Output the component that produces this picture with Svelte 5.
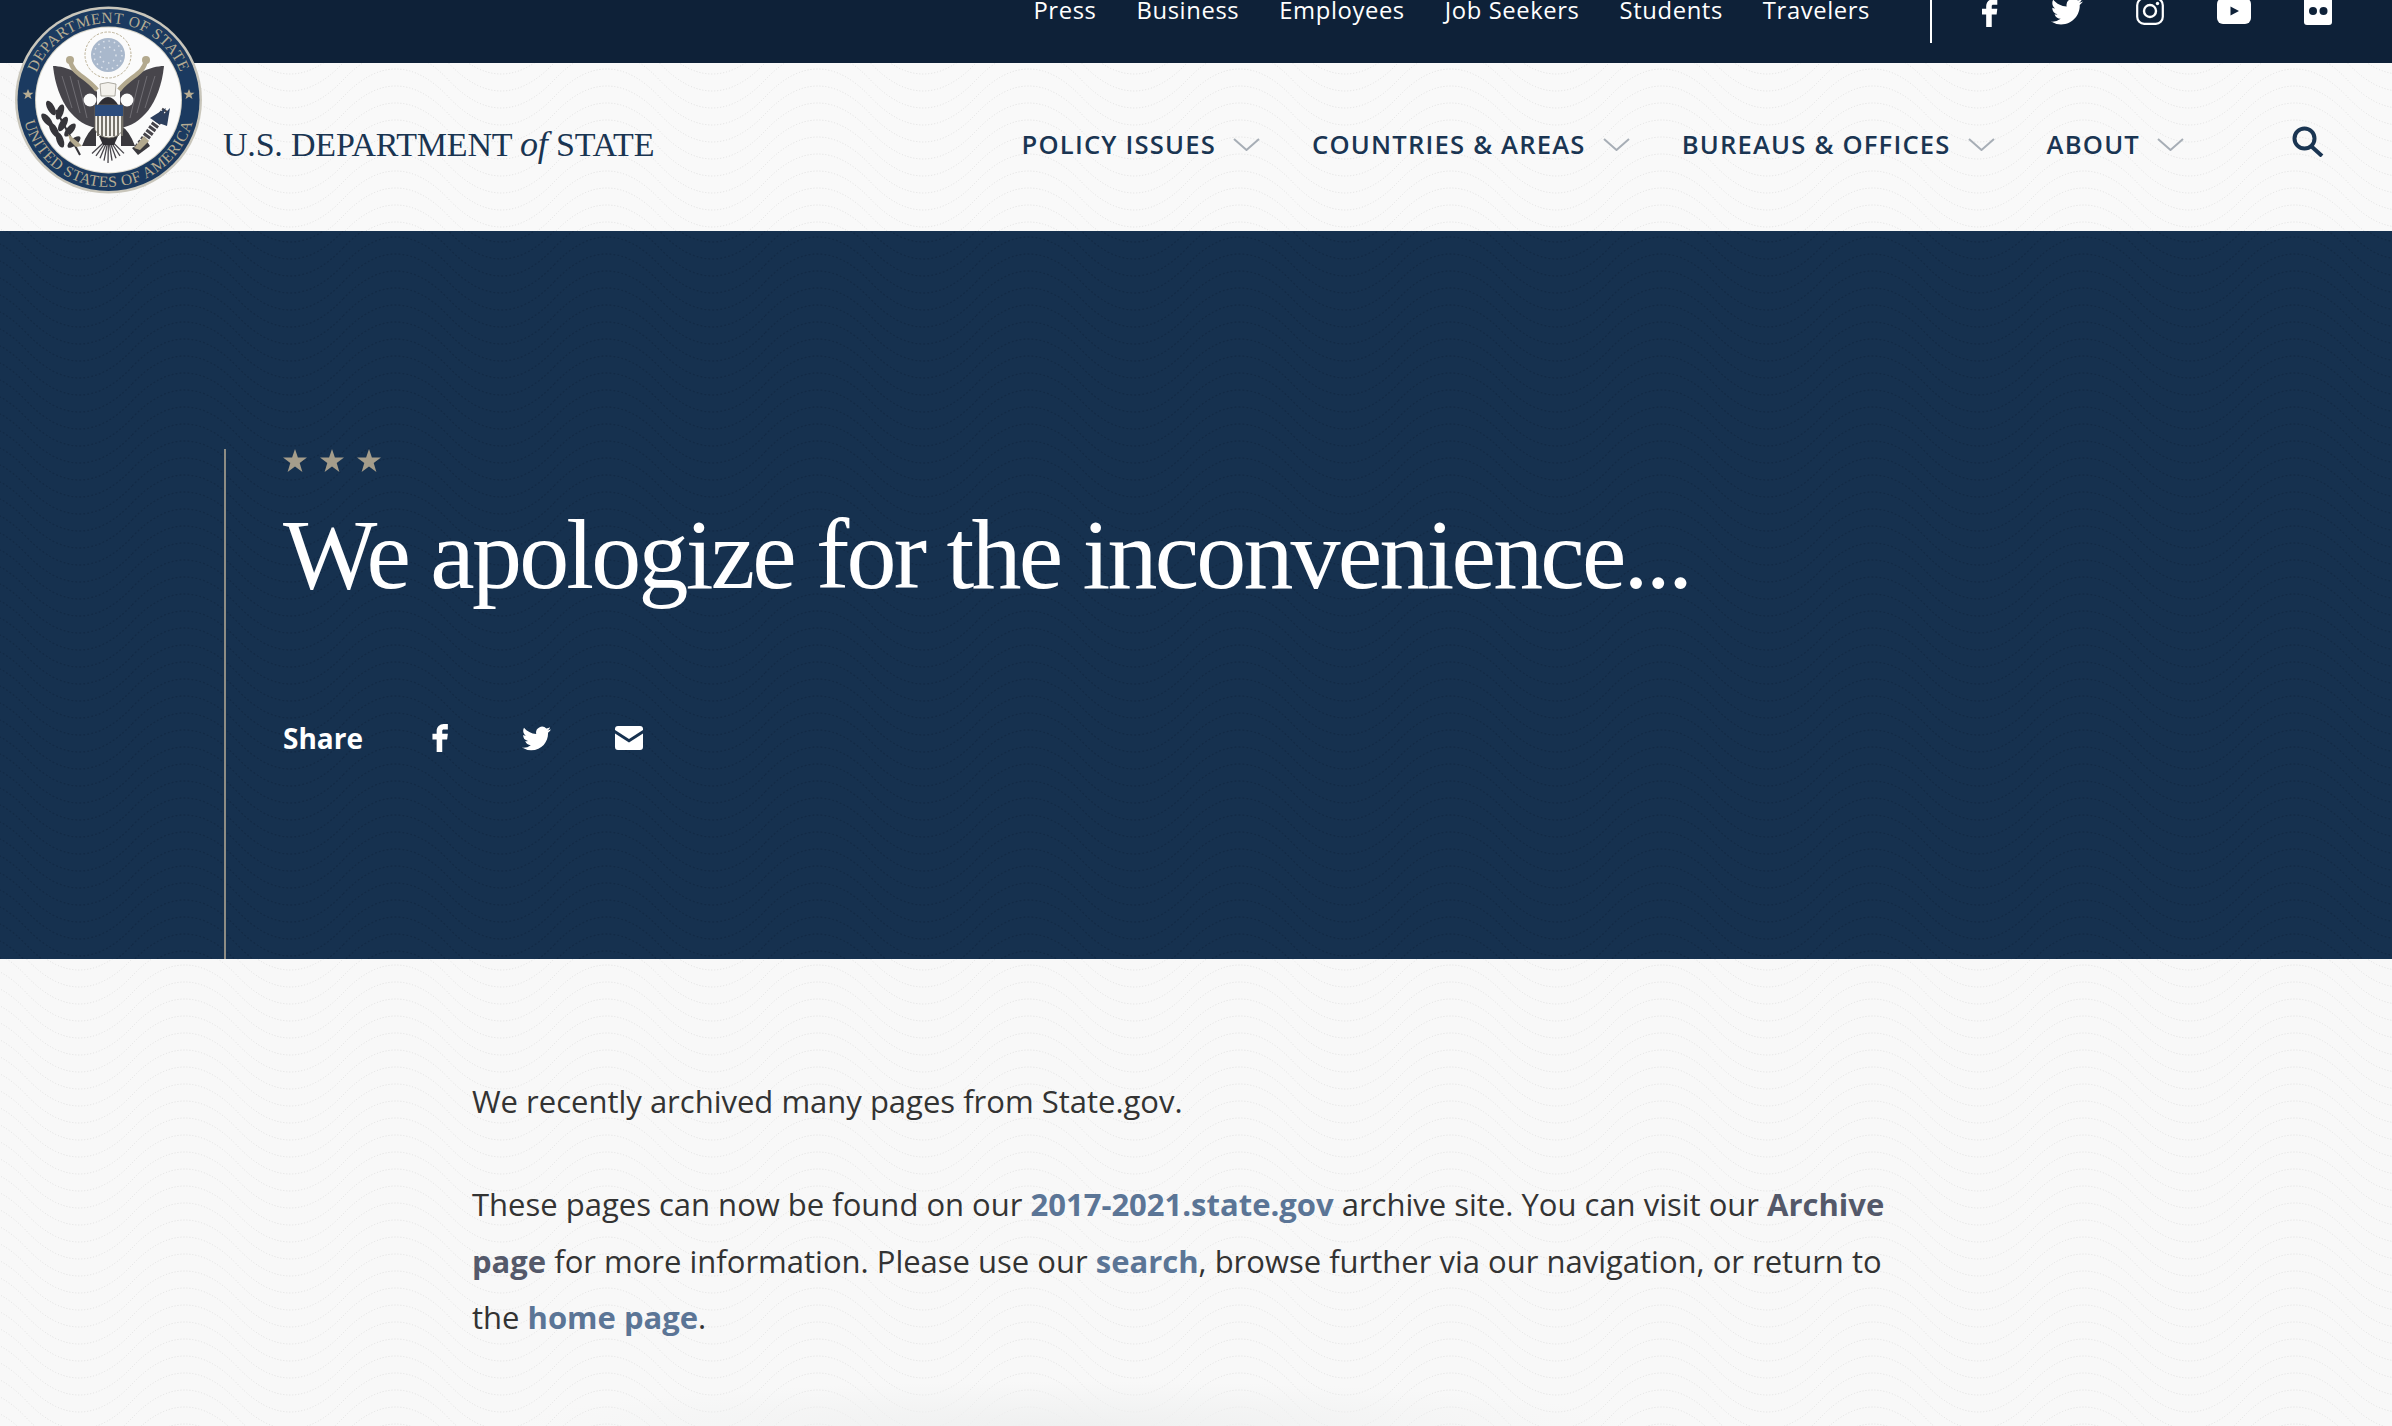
<script>
  const topLinks = ["Press", "Business", "Employees", "Job Seekers", "Students", "Travelers"];
  const mainLinks = ["POLICY ISSUES", "COUNTRIES & AREAS", "BUREAUS & OFFICES", "ABOUT"];
  const fb = "M14 8h3V4h-3c-2.8 0-5 2.2-5 5v2H6v4h3v9h4v-9h3.5l.5-4h-4V9c0-.6.4-1 1-1z";
  const tw = "M23.953 4.57a10 10 0 01-2.825.775 4.958 4.958 0 002.163-2.723c-.951.555-2.005.959-3.127 1.184a4.92 4.92 0 00-8.384 4.482C7.69 8.095 4.067 6.13 1.64 3.162a4.822 4.822 0 00-.666 2.475c0 1.71.87 3.213 2.188 4.096a4.904 4.904 0 01-2.228-.616v.06a4.923 4.923 0 003.946 4.827 4.996 4.996 0 01-2.212.085 4.936 4.936 0 004.604 3.417 9.867 9.867 0 01-6.102 2.105c-.39 0-.779-.023-1.17-.067a13.995 13.995 0 007.557 2.209c9.053 0 13.998-7.496 13.998-13.985 0-.21 0-.42-.015-.63A9.935 9.935 0 0024 4.59z";
  const wing = "M53 66C66 66 86 74 97 92L97 128C76 125 57 104 53 66Z";
  const feathers = [[62, 76, 72, 108], [70, 76, 80, 113], [78, 80, 87, 118]];
  const stripes = [97, 101, 105, 109, 113, 117, 121];
  const tail = [92, 96, 100, 104, 108, 112, 116, 120, 124];
  const leaves = [[51, 108, -30], [60, 112, 20], [47, 120, -40], [63, 124, 30], [54, 130, -30], [70, 130, 40], [60, 140, -20], [74, 142, 50]];

  // dotted wave tile, period 211px like the site's background
  function wave(color, width, dash) {
    let d = "";
    for (let y = -34; y <= 136; y += 17) d += `M0 ${y}q52.75-56 105.5 0t105.5 0`;
    const svg = `<svg xmlns='http://www.w3.org/2000/svg' width='211' height='102'><path d='${d}' fill='none' stroke='${color}' stroke-width='${width}' stroke-dasharray='${dash}'/></svg>`;
    return `url("data:image/svg+xml,${encodeURIComponent(svg)}")`;
  }
  const waves = `--wave-light: ${wave("#dedede", 1, "1 2")}; --wave-dark: ${wave("#122a46", 1.5, "2 2")}`;
</script>

<div class="page" style={waves}>
  <div class="topbar">
    <nav class="toplinks">
      {#each topLinks as link}
        <a href="#top">{link}</a>
      {/each}
    </nav>
    <span class="divider"></span>
    <div class="social">
      <svg class="s-fb" viewBox="6 4 11.5 20"><path d={fb} /></svg>
      <svg class="s-tw" viewBox="0 2 24 20"><path d={tw} /></svg>
      <svg class="s-ig" viewBox="0 0 28 28">
        <rect x="1.2" y="1.2" width="25.6" height="25.6" rx="7" fill="none" stroke="#fff" stroke-width="2.2" />
        <circle cx="14" cy="14" r="6" fill="none" stroke="#fff" stroke-width="2.4" />
        <circle cx="21.5" cy="6.5" r="1.7" />
      </svg>
      <svg class="s-yt" viewBox="0 0 34 26">
        <rect width="34" height="26" rx="6" />
        <path d="M13.5 8.5l8.5 4.5-8.5 4.5z" fill="#0e2138" />
      </svg>
      <svg class="s-fl" viewBox="0 0 28 28">
        <rect width="28" height="28" rx="3" />
        <circle cx="9" cy="14" r="4" fill="#0e2138" />
        <circle cx="19.5" cy="14" r="4" fill="#0e2138" />
      </svg>
    </div>
  </div>

  <header class="header">
    <svg class="seal" viewBox="0 0 210 210">
      <defs>
        <path id="arc-top" d="M31.5 100a77 77 0 0 1 154 0" />
        <path id="arc-bottom" d="M21.5 100a87 87 0 0 0 174 0" />
      </defs>
      <circle cx="108.5" cy="100" r="93.5" fill="#c9c6bb" />
      <circle cx="108.5" cy="100" r="91" fill="#1b3a60" />
      <circle cx="108.5" cy="100" r="73.5" fill="#d5d2c6" />
      <circle cx="108.5" cy="100" r="72.5" fill="#fbfbfb" />
      <text class="ring-text">
        <textPath href="#arc-top" startOffset="50%" text-anchor="middle">DEPARTMENT OF STATE</textPath>
      </text>
      <text class="ring-text">
        <textPath href="#arc-bottom" startOffset="50%" text-anchor="middle">UNITED STATES OF AMERICA</textPath>
      </text>
      <polygon class="ring-star" points="28,89 29.5,92.8 33.5,92.8 30.3,95.2 31.5,99 28,96.7 24.5,99 25.7,95.2 22.5,92.8 26.5,92.8" />
      <polygon class="ring-star" points="189,89 190.5,92.8 194.5,92.8 191.3,95.2 192.5,99 189,96.7 185.5,99 186.7,95.2 183.5,92.8 187.5,92.8" />

      <circle cx="108" cy="55" r="23" fill="none" stroke="#b9ae93" stroke-width="1" stroke-dasharray="2.5 1.5" />
      <circle cx="108" cy="55" r="17" fill="#a9b8cc" />
      <circle cx="108" cy="55" r="14" fill="none" stroke="#dde3ec" stroke-width="1.5" stroke-dasharray="1.5 4" />
      <circle cx="108" cy="55" r="8" fill="none" stroke="#dde3ec" stroke-width="1.5" stroke-dasharray="1.5 4" />

      <path d={wing} fill="#47454b" />
      <path d={wing} fill="#47454b" transform="matrix(-1 0 0 1 217 0)" />
      {#each feathers as [x1, y1, x2, y2]}
        <path d="M{x1} {y1}L{x2} {y2}M{217 - x1} {y1}L{217 - x2} {y2}" stroke="#6f6d73" stroke-width="1" />
      {/each}
      <circle cx="90" cy="100" r="6.5" fill="#fbfbfb" />
      <circle cx="127" cy="100" r="6.5" fill="#fbfbfb" />

      <path d="M70 60C72 74 86 76 97 90" fill="none" stroke="#b3a98e" stroke-width="4.5" />
      <path d="M146 60C144 74 130 76 119 90" fill="none" stroke="#b3a98e" stroke-width="4.5" />
      <circle cx="70" cy="60" r="4" fill="#b3a98e" />
      <circle cx="146" cy="60" r="4" fill="#b3a98e" />
      <path d="M100 84q8-3 16 0l-1 12h-14z" fill="#f3f1ec" stroke="#8d8a80" stroke-width=".7" />
      <path d="M97 106q11-18 22 0z" fill="#2f2e33" />

      <path d="M82 146q6-16 14-20v20zM135 146q-6-16-14-20v20z" fill="#3a393e" />
      {#each tail as x}
        <path d="M108.5 138L{x} {163 - Math.abs(x - 108) * 0.6}" stroke="#47454b" stroke-width="1.3" />
      {/each}
      <path d="M99 136h19l-4 9h-11z" fill="#2f2e33" />

      <path d="M95 105h28v25q-4 7-14 8-10-1-14-8z" fill="#f3f1ec" stroke="#6f6b60" stroke-width=".8" />
      {#each stripes as x}
        <rect {x} y="116" width="2" height="20" fill="#77746c" />
      {/each}
      <rect x="95" y="105" width="28" height="11" fill="#2c4c7c" />

      {#each leaves as [x, y, a]}
        <ellipse cx={x} cy={y} rx="3.5" ry="8" fill="#36353a" transform="rotate({a} {x} {y})" />
      {/each}
      <path d="M56 110L80 155" stroke="#36353a" stroke-width="2" />
      <path d="M68 134l10 8 4 4-6 1-6-6z" fill="#b3a98e" />

      <path d="M138 148l28-38" stroke="#47454b" stroke-width="8" stroke-dasharray="3 1.5" />
      <path d="M156 122l14-14-3 18zM150 118l16-10-7 16z" fill="#2c3f5e" />
      <path d="M132 148l14-8 4 6-12 9z" fill="#3a393e" />
      <path d="M134 148l10-12 5 5-9 9z" fill="#b3a98e" />
    </svg>
    <a class="wordmark" href="#top">U.S. DEPARTMENT <i>of</i> STATE</a>

    <nav class="mainnav">
      {#each mainLinks as link}
        <a href="#top">
          {link}
          <svg viewBox="0 0 27 13"><path d="M1 1l12.5 11L26 1" /></svg>
        </a>
      {/each}
    </nav>
    <svg class="search" viewBox="0 0 32 31">
      <circle cx="12.5" cy="12.5" r="10" />
      <path d="M19 20l11 10" />
    </svg>
  </header>

  <section class="hero">
    <div class="hero-inner">
      <div class="stars">
        {#each [0, 1, 2] as i (i)}
          <svg viewBox="0 0 24 23"><path d="M12 0l2.9 8.5H24l-7.3 5.4 2.7 9L12 17.500l-7.400 5.400 2.700-9L0 8.500h9.100z" /></svg>
        {/each}
      </div>
      <h1>We apologize for the inconvenience...</h1>
      <div class="share">
        <strong>Share</strong>
        <svg class="sh-fb" viewBox="6 4 11.5 20"><path d={fb} /></svg>
        <svg class="sh-tw" viewBox="0 2 24 20"><path d={tw} /></svg>
        <svg class="sh-mail" viewBox="0 0 28 24">
          <path d="M3 0h22a3 3 0 0 1 3 3v1L14 13 0 4V3a3 3 0 0 1 3-3z" />
          <path d="M0 7.5l14 9 14-9V21a3 3 0 0 1-3 3H3a3 3 0 0 1-3-3z" />
        </svg>
      </div>
    </div>
  </section>

  <main class="content">
    <p>We recently archived many pages from State.gov.</p>
    <p>
      These pages can now be found on our <a href="#top">2017-2021.state.gov</a> archive site. You can visit our <b>Archive page</b> for more information. Please use our <a href="#top">search</a>, browse further via our navigation, or return to the <a href="#top">home page</a>.
    </p>
  </main>
</div>

<style>
  :global(body) {
    margin: 0;
  }

  .page {
    height: 1426px;
    overflow: hidden;
    position: relative;
    font-family: "Open Sans", sans-serif;
  }

  a {
    text-decoration: none;
    color: inherit;
  }

  .topbar {
    height: 63px;
    background: #0e2138;
    display: flex;
    align-items: flex-start;
    justify-content: flex-end;
    padding-right: 60px;
    color: #fff;
  }

  .toplinks {
    display: flex;
    align-items: center;
    gap: 40px;
    height: 44px;
    margin-top: -12px;
    font-size: 23.8px;
    letter-spacing: 0.6px;
  }

  .divider {
    width: 2px;
    height: 43px;
    background: #fff;
    margin-left: 60px;
  }

  .social {
    display: flex;
    align-items: center;
    gap: 53px;
    height: 44px;
    margin-top: -11px;
    margin-left: 50px;
  }

  .social svg,
  .share svg {
    fill: #fff;
    display: block;
  }

  .s-fb { width: 16px; height: 28px; margin-top: 4px; }
  .s-tw { width: 32px; height: 27px; }
  .s-ig { width: 28px; height: 28px; }
  .s-yt { width: 34px; height: 26px; }
  .s-fl { width: 28px; height: 28px; }

  .header {
    height: 168px;
    display: flex;
    align-items: center;
    padding: 0 68px 0 223px;
    background: #f9f9f9 var(--wave-light) 132px 0;
  }

  .seal {
    position: absolute;
    left: 0;
    top: 0;
    width: 210px;
    height: 210px;
  }

  .ring-text {
    font-family: "Liberation Serif", serif;
    font-size: 15.5px;
    fill: #b6ac93;
    letter-spacing: 0.6px;
  }

  .ring-star {
    fill: #b6ac93;
  }

  .wordmark {
    font-family: "Liberation Serif", serif;
    font-size: 34px;
    letter-spacing: -0.2px;
    color: #1a3552;
    margin-top: -6px;
  }

  .wordmark i {
    font-size: 36px;
  }

  .mainnav {
    margin-left: auto;
    margin-top: -5px;
    display: flex;
    gap: 52px;
    font-size: 25.6px;
    font-weight: 600;
    letter-spacing: 1.2px;
    color: #1a3552;
  }

  .mainnav a {
    display: flex;
    align-items: center;
    gap: 17px;
  }

  .mainnav svg {
    width: 27px;
    height: 13px;
    fill: none;
    stroke: #a7aeb6;
    stroke-width: 2;
  }

  .search {
    width: 32px;
    height: 31px;
    margin-left: 108px;
    margin-top: -11px;
    fill: none;
    stroke: #1a3552;
    stroke-width: 4;
  }

  .hero {
    height: 728px;
    padding: 218px 0 0 224px;
    box-sizing: border-box;
    background: #16314f var(--wave-dark) 132px 0;
  }

  .hero-inner {
    height: 100%;
    border-left: 2px solid #8d8c84;
    padding-left: 57px;
    color: #fff;
  }

  .stars {
    display: flex;
    gap: 13px;
    height: 24px;
    fill: #a59d8b;
  }

  .stars svg {
    width: 24px;
    height: 23px;
  }

  h1 {
    margin: 27px 0 0;
    font-family: "Liberation Serif", serif;
    font-weight: 400;
    font-size: 100px;
    line-height: 110px;
    letter-spacing: -2.8px;
    white-space: nowrap;
  }

  .share {
    display: flex;
    align-items: center;
    margin-top: 109px;
  }

  .share strong {
    font-size: 28px;
    font-weight: 700;
    margin-right: 69px;
  }

  .sh-fb { width: 17px; height: 28px; margin-right: 73px; }
  .sh-tw { width: 29px; height: 25px; margin-right: 64px; }
  .sh-mail { width: 28px; height: 24px; }

  .content {
    height: 467px;
    box-sizing: border-box;
    padding: 114px 0 0 472px;
    background-color: #f8f8f8;
    background-image: radial-gradient(ellipse 560px 45px at 1075px 100%, #eff0f0, transparent), var(--wave-light);
    background-position: 0 0, 132px 0;
    color: #333;
    font-size: 31px;
    line-height: 56.4px;
  }

  .content p {
    margin: 0 0 47px;
    width: 1425px;
  }

  .content a {
    font-weight: 700;
    color: #5b7596;
  }

  .content b {
    color: #54596a;
  }
</style>
